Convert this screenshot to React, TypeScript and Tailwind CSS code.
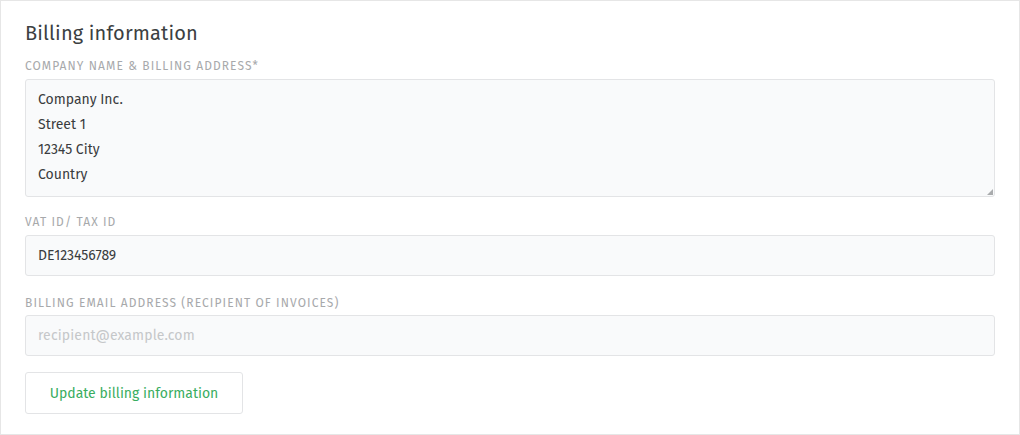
import React from "react";

const font = { fontFamily: '"Fira Sans", "Open Sans", sans-serif' };

export default function App() {
  return (
    <div className="w-[1020px] h-[435px] bg-white" style={font}>
      <div className="h-[435px] border border-[#e6e6e6] px-6 pt-[18px] pb-5 flex flex-col">
        <h2 className="text-[20px] leading-[28px] tracking-[0.15px] text-[#3c3f42]">Billing information</h2>
        <label className="mt-[11px] mb-[5px] text-[12px] leading-[16px] uppercase tracking-[1.08px] text-[#a7a9ab]">
          Company name &amp; billing address*
        </label>
        <div className="relative">
          <textarea
            className="block h-[118px] w-full resize-none border border-[#e3e4e6] rounded-[3px] bg-[#f9fafb] px-3 pt-[7px] pb-2 text-[14px] leading-[25px] text-[#3a3c3e] outline-none"
            style={font}
            defaultValue={"Company Inc.\nStreet 1\n12345 City\nCountry"}
          />
          <svg className="absolute right-[2px] bottom-[2px]" width="6" height="6" viewBox="0 0 6 6">
            <polygon points="6,0 6,6 0,6" fill="#a9abad" />
          </svg>
        </div>
        <label className="mt-[17px] mb-[5px] text-[12px] leading-[16px] uppercase tracking-[1.08px] text-[#a7a9ab]">
          VAT ID/ Tax ID
        </label>
        <input
          className="h-[41px] w-full border border-[#e3e4e6] rounded-[3px] bg-[#f9fafb] px-3 text-[14px] text-[#3a3c3e] outline-none"
          style={font}
          defaultValue="DE123456789"
        />
        <label className="mt-[19px] mb-[4px] text-[12px] leading-[16px] uppercase tracking-[1.08px] text-[#a7a9ab]">
          Billing email address (recipient of invoices)
        </label>
        <input
          className="h-[41px] w-full border border-[#e3e4e6] rounded-[3px] bg-[#f9fafb] px-3 text-[14px] tracking-[0.14px] text-[#3a3c3e] outline-none placeholder:text-[#c5c7c9]"
          style={font}
          placeholder="recipient@example.com"
        />
        <div className="mt-4">
          <button
            className="h-[42px] w-[218px] border border-[#e3e4e6] rounded-[3px] bg-white text-[14px] text-[#39ad5f]"
            style={font}
          >
            Update billing information
          </button>
        </div>
      </div>
    </div>
  );
}
